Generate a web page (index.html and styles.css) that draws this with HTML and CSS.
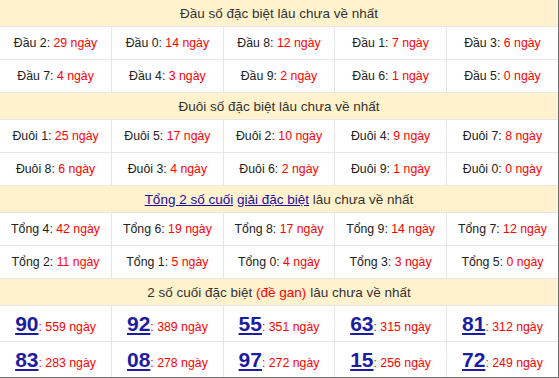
FILE: index.html
```html
<!DOCTYPE html>
<html lang="vi">
<head>
<meta charset="utf-8">
<link rel="stylesheet" href="styles.css">
</head>
<body>
<div class="wrap">
<table class="stats">
  <tr><th colspan="5" class="head">Đầu số đặc biệt lâu chưa về nhất</th></tr>
  <tr>
    <td>Đầu 2: <span class="red">29 ngày</span></td>
    <td>Đầu 0: <span class="red">14 ngày</span></td>
    <td>Đầu 8: <span class="red">12 ngày</span></td>
    <td>Đầu 1: <span class="red">7 ngày</span></td>
    <td>Đầu 3: <span class="red">6 ngày</span></td>
  </tr>
  <tr>
    <td>Đầu 7: <span class="red">4 ngày</span></td>
    <td>Đầu 4: <span class="red">3 ngày</span></td>
    <td>Đầu 9: <span class="red">2 ngày</span></td>
    <td>Đầu 6: <span class="red">1 ngày</span></td>
    <td>Đầu 5: <span class="red">0 ngày</span></td>
  </tr>
  <tr><th colspan="5" class="head">Đuôi số đặc biệt lâu chưa về nhất</th></tr>
  <tr>
    <td>Đuôi 1: <span class="red">25 ngày</span></td>
    <td>Đuôi 5: <span class="red">17 ngày</span></td>
    <td>Đuôi 2: <span class="red">10 ngày</span></td>
    <td>Đuôi 4: <span class="red">9 ngày</span></td>
    <td>Đuôi 7: <span class="red">8 ngày</span></td>
  </tr>
  <tr>
    <td>Đuôi 8: <span class="red">6 ngày</span></td>
    <td>Đuôi 3: <span class="red">4 ngày</span></td>
    <td>Đuôi 6: <span class="red">2 ngày</span></td>
    <td>Đuôi 9: <span class="red">1 ngày</span></td>
    <td>Đuôi 0: <span class="red">0 ngày</span></td>
  </tr>
  <tr><th colspan="5" class="head"><a href="#" class="link">Tổng 2 số cuối</a> <a href="#" class="link">giải đặc biệt</a> lâu chưa về nhất</th></tr>
  <tr>
    <td>Tổng 4: <span class="red">42 ngày</span></td>
    <td>Tổng 6: <span class="red">19 ngày</span></td>
    <td>Tổng 8: <span class="red">17 ngày</span></td>
    <td>Tổng 9: <span class="red">14 ngày</span></td>
    <td>Tổng 7: <span class="red">12 ngày</span></td>
  </tr>
  <tr>
    <td>Tổng 2: <span class="red">11 ngày</span></td>
    <td>Tổng 1: <span class="red">5 ngày</span></td>
    <td>Tổng 0: <span class="red">4 ngày</span></td>
    <td>Tổng 3: <span class="red">3 ngày</span></td>
    <td>Tổng 5: <span class="red">0 ngày</span></td>
  </tr>
  <tr><th colspan="5" class="head">2 số cuối đặc biệt <span class="red">(đề gan)</span> lâu chưa về nhất</th></tr>
  <tr class="big-row">
    <td><a href="#" class="num">90</a><span class="red">: 559 ngày</span></td>
    <td><a href="#" class="num">92</a><span class="red">: 389 ngày</span></td>
    <td><a href="#" class="num">55</a><span class="red">: 351 ngày</span></td>
    <td><a href="#" class="num">63</a><span class="red">: 315 ngày</span></td>
    <td><a href="#" class="num">81</a><span class="red">: 312 ngày</span></td>
  </tr>
  <tr class="big-row">
    <td><a href="#" class="num">83</a><span class="red">: 283 ngày</span></td>
    <td><a href="#" class="num">08</a><span class="red">: 278 ngày</span></td>
    <td><a href="#" class="num">97</a><span class="red">: 272 ngày</span></td>
    <td><a href="#" class="num">15</a><span class="red">: 256 ngày</span></td>
    <td><a href="#" class="num">72</a><span class="red">: 249 ngày</span></td>
  </tr>
</table>
</div>
</body>
</html>
```

FILE: styles.css
```css
html, body {
  margin: 0;
  padding: 0;
  background: #fff;
}
.wrap {
  width: 558px;
  border-right: 1px solid #6e6e6e;
  border-bottom: 1px solid #6e6e6e;
}
.stats {
  width: 100%;
  border-collapse: collapse;
  table-layout: fixed;
  font-family: "Liberation Sans", Arial, sans-serif;
  font-size: 12.3px;
  color: #222;
}
.stats td, .stats th {
  border: 1px solid #e6e6e6;
  text-align: center;
  padding: 0;
}
.stats td {
  height: 32px;
}
.stats tr:first-child th {
  border-top: none;
}
.stats td:first-child, .stats th {
  border-left: none;
}
.stats td:last-child, .stats th {
  border-right: none;
}
.head {
  background: #fff2cc;
  font-weight: normal;
  font-size: 13.5px;
  height: 26px;
  color: #333;
}
.red {
  color: #ff0000;
}
.link {
  color: #1a0dab;
  text-decoration: underline;
}
.big-row td {
  height: 35px;
}
.stats tr:last-child td {
  border-bottom: none;
}
.num {
  color: #1c1ca0;
  font-size: 21px;
  font-weight: bold;
  text-decoration: underline;
}
```
